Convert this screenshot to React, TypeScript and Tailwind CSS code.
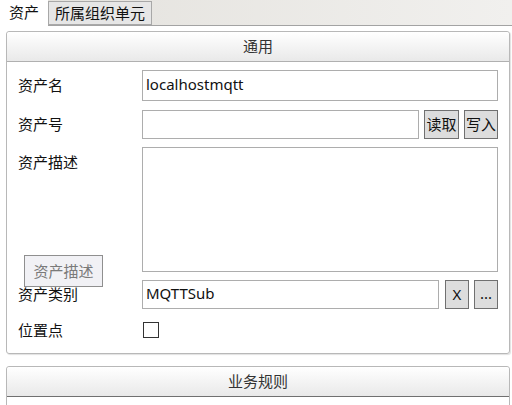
import React from 'react';

const font = { fontFamily: '"Noto Sans", "Noto Sans CJK SC", sans-serif' };

function Field({ label, children, top }: { label: string; children: React.ReactNode; top?: boolean }) {
  return (
    <div className={`flex ${top ? 'items-start' : 'items-center'}`}>
      <div className={`w-[124px] shrink-0 text-[15px] leading-none text-[#111] ${top ? 'pt-[8px]' : ''}`}>{label}</div>
      <div className="flex flex-1 items-center gap-[5px]">{children}</div>
    </div>
  );
}

function Btn({ children, w }: { children: React.ReactNode; w: string }) {
  return (
    <div className={`${w} h-[29px] shrink-0 flex items-center justify-center bg-[#dddddd] border border-[#707070] text-[15px] text-[#111] leading-none`}>
      {children}
    </div>
  );
}

export default function App() {
  return (
    <div className="w-[512px] h-[405px] bg-white overflow-hidden" style={font}>
      {/* tab strip */}
      <div className="relative h-[26px] flex bg-gradient-to-r from-[#e3e1dc] to-[#f1f0ee]">
        <div className="absolute left-0 right-0 bottom-0 h-px bg-[#a3a3a3]" />
        <div className="relative z-10 w-[48px] h-[26px] bg-white flex items-center justify-center text-[15px] text-[#111] pb-[2px]">资产</div>
        <div className="relative mt-[1px] w-[104px] h-[24px] bg-[#e6e6e6] border border-[#a8a8a8] flex items-center justify-center text-[15px] text-[#111]">所属组织单元</div>
      </div>

      <div className="px-[6px] pt-[5px] flex flex-col gap-[12px] pr-[2px]">
        {/* 通用 */}
        <div className="relative border border-[#b8b8b8] rounded-[3px] shadow-[1px_1px_1px_rgba(0,0,0,0.12)]">
          <div className="h-[30px] flex items-center justify-center bg-gradient-to-b from-white to-[#e9e9e9] border-b border-[#b0b0b0] text-[15px] text-[#333] rounded-t-[3px]">通用</div>
          <div className="pl-[11px] pr-[11px] pt-[8px] pb-[15px] flex flex-col gap-[8px]">
            <Field label="资产名">
              <div className="flex-1 h-[31px] border border-[#adadad] bg-white px-[3px] flex items-center text-[15px] text-[#111] pb-[3px]">localhostmqtt</div>
            </Field>
            <div className="mt-[1px]">
              <Field label="资产号">
                <div className="flex-1 h-[29px] border border-[#adadad] bg-white" />
                <Btn w="w-[35px]">读取</Btn>
                <Btn w="w-[34px]">写入</Btn>
              </Field>
            </div>
            <Field label="资产描述" top>
              <div className="flex-1 h-[125px] border border-[#adadad] bg-white" />
            </Field>
            <Field label="资产类别">
              <div className="flex-1 h-[29px] border border-[#adadad] bg-white px-[3px] flex items-center text-[15px] text-[#111] pb-[3px]">MQTTSub</div>
              <Btn w="w-[24px] ml-[1px]">X</Btn>
              <Btn w="w-[24px]"><span className="pb-[3px]">...</span></Btn>
            </Field>
            <div className="flex items-center mt-[5px]">
              <div className="w-[124px] shrink-0 text-[15px] leading-none text-[#111]">位置点</div>
              <div className="ml-[1px] w-[16px] h-[16px] border border-[#333] bg-white" />
            </div>
          </div>

          {/* tooltip */}
          <div className="absolute left-[17px] top-[223px] w-[79px] h-[32px] bg-[#f1f1f5] border border-[#8f8f8f] flex items-center justify-center text-[15px] text-[#7a7a7a]">资产描述</div>
        </div>

        {/* 业务规则 */}
        <div className="border border-[#b8b8b8] rounded-[3px] h-[60px]">
          <div className="h-[30px] flex items-center justify-center bg-gradient-to-b from-white to-[#e9e9e9] border-b border-[#707070] text-[15px] text-[#333] rounded-t-[3px]">业务规则</div>
        </div>
      </div>
    </div>
  );
}
